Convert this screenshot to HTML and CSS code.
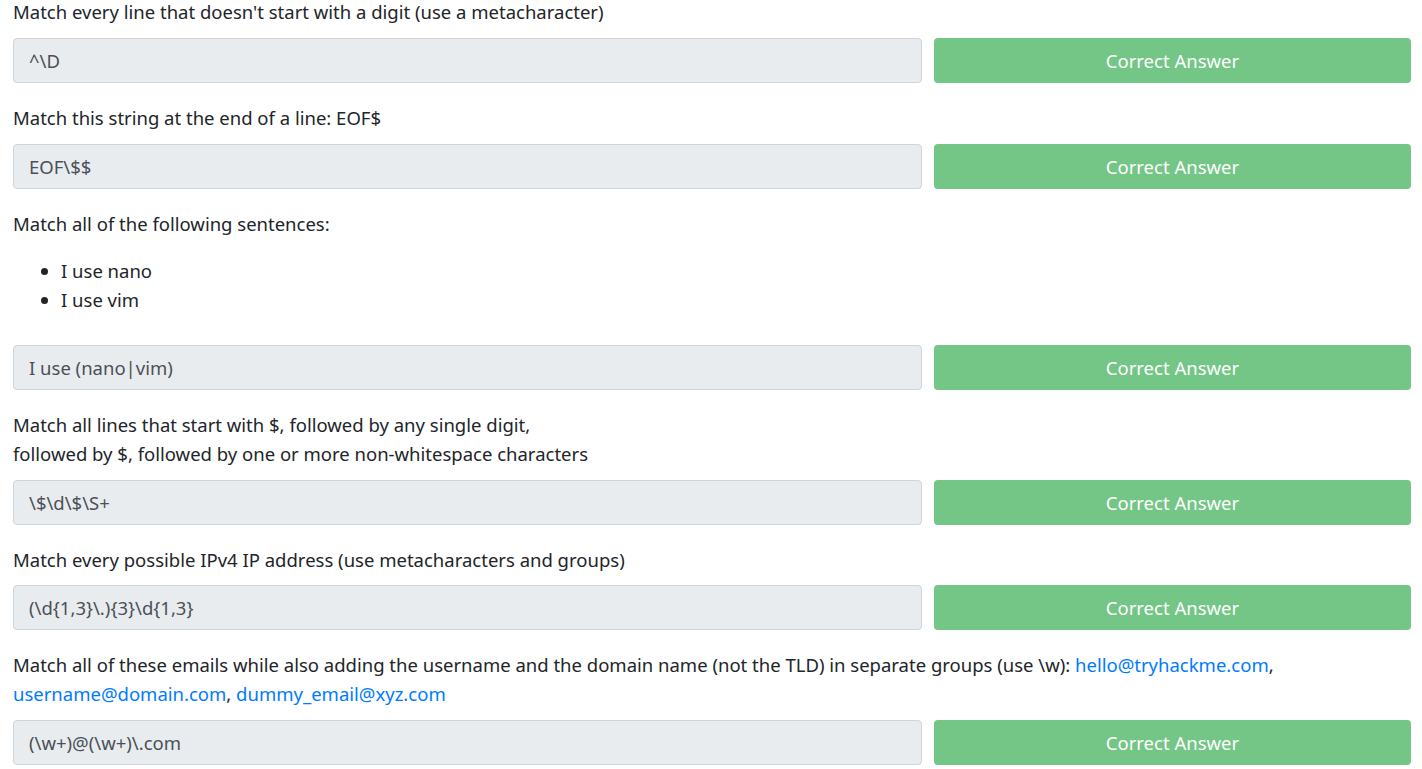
FILE: index.html
```html
<!DOCTYPE html>
<html lang="en">
<head>
<meta charset="utf-8">
<title>Regex answers</title>
<link rel="stylesheet" href="styles.css">
</head>
<body>
<div class="page">
  <section class="task">
    <p class="q">Match every line that doesn't start with a digit (use a metacharacter)</p>
    <div class="answer-row">
      <div class="answer-input">^\D</div>
      <button class="btn-correct" disabled>Correct Answer</button>
    </div>
  </section>
  <section class="task">
    <p class="q">Match this string at the end of a line: EOF$</p>
    <div class="answer-row">
      <div class="answer-input">EOF\$$</div>
      <button class="btn-correct" disabled>Correct Answer</button>
    </div>
  </section>
  <section class="task">
    <p class="q">Match all of the following sentences:</p>
    <ul class="q-list">
      <li>I use nano</li>
      <li>I use vim</li>
    </ul>
    <div class="answer-row">
      <div class="answer-input">I use (nano|vim)</div>
      <button class="btn-correct" disabled>Correct Answer</button>
    </div>
  </section>
  <section class="task">
    <p class="q">Match all lines that start with $, followed by any single digit,<br>followed by $, followed by one or more non-whitespace characters</p>
    <div class="answer-row">
      <div class="answer-input">\$\d\$\S+</div>
      <button class="btn-correct" disabled>Correct Answer</button>
    </div>
  </section>
  <section class="task">
    <p class="q">Match every possible IPv4 IP address (use metacharacters and groups)</p>
    <div class="answer-row">
      <div class="answer-input">(\d{1,3}\.){3}\d{1,3}</div>
      <button class="btn-correct" disabled>Correct Answer</button>
    </div>
  </section>
  <section class="task">
    <p class="q">Match all of these emails while also adding the username and the domain name (not the TLD) in separate groups (use \w): <a href="#">hello@tryhackme.com</a>, <a href="#">username@domain.com</a>, <a href="#">dummy_email@xyz.com</a></p>
    <div class="answer-row">
      <div class="answer-input">(\w+)@(\w+)\.com</div>
      <button class="btn-correct" disabled>Correct Answer</button>
    </div>
  </section>
</div>
</body>
</html>
```

FILE: styles.css
```css
html, body {
  margin: 0;
  padding: 0;
  background: #ffffff;
}

body {
  font-family: "Noto Sans", "Open Sans", sans-serif;
  font-size: 18.5px;
  line-height: 28.8px;
  color: #212529;
}

.page {
  padding: 0 11px 0 13px;
  margin-top: -2px;
}

.task {
  margin-bottom: 21px;
}

.q {
  margin: 0 0 11px;
}

.q a {
  color: #007bff;
  text-decoration: none;
}

.q-list {
  margin: 19px 0 30px;
  padding-left: 48px;
}

.answer-row {
  display: grid;
  grid-template-columns: 1fr 477px;
  column-gap: 12px;
  height: 45px;
}

.answer-input {
  box-sizing: border-box;
  height: 45px;
  padding: 8px 15px;
  background: #e9ecef;
  border: 1px solid #ced4da;
  border-radius: 4px;
  color: #495057;
  line-height: 27px;
  white-space: nowrap;
}

.btn-correct {
  box-sizing: border-box;
  height: 45px;
  border: 0;
  border-radius: 4px;
  background: #73c686;
  color: #ffffff;
  font-family: inherit;
  font-size: 18.5px;
  line-height: 27px;
  padding: 8px 16px;
  cursor: default;
}
```
